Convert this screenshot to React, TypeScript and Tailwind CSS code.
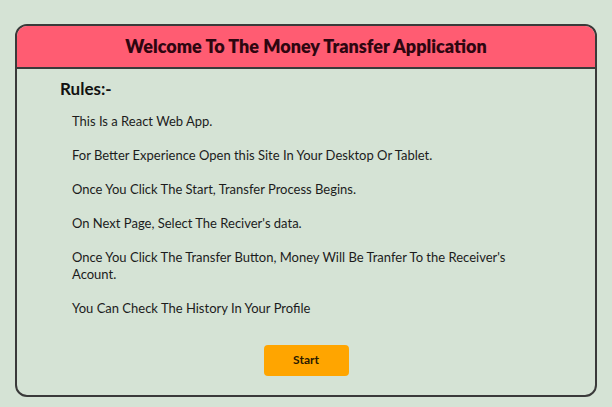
const rules = [
  "This Is a React Web App.",
  "For Better Experience Open this Site In Your Desktop Or Tablet.",
  "Once You Click The Start, Transfer Process Begins.",
  "On Next Page, Select The Reciver's data.",
  "Once You Click The Transfer Button, Money Will Be Tranfer To the Receiver's Acount.",
  "You Can Check The History In Your Profile",
];

export default function App() {
  return (
    <div
      className="min-h-screen bg-[#d5e3d5] px-[15px] pt-[24px] pb-[10px]"
      style={{ fontFamily: "Lato, 'Open Sans', sans-serif" }}
    >
      <div className="w-[582px] h-[373px] rounded-[12px] border-2 border-[#3a3a3a] overflow-hidden flex flex-col">
        <div className="h-[43px] bg-[#ff5c72] border-b-2 border-[#3a3a3a] flex items-center justify-center">
          <h1 className="text-[18px] font-extrabold text-[#2e0610]">Welcome To The Money Transfer Application</h1>
        </div>
        <div className="flex-1 flex flex-col">
          <h2 className="mt-[7px] ml-[43px] text-[17px] font-bold text-[#111]">Rules:-</h2>
          <ul className="mt-[11px] ml-[55px] w-[460px] flex flex-col gap-[17px] text-[13px] leading-[17px] text-[#1c1c1c]">
            {rules.map((r) => (
              <li key={r}>{r}</li>
            ))}
          </ul>
          <div className="mt-[28px] flex justify-center">
            <button className="w-[85px] h-[31px] rounded-[4px] bg-[#ffa500] text-[12px] font-bold text-[#2a1a00]">
              Start
            </button>
          </div>
        </div>
      </div>
    </div>
  );
}
